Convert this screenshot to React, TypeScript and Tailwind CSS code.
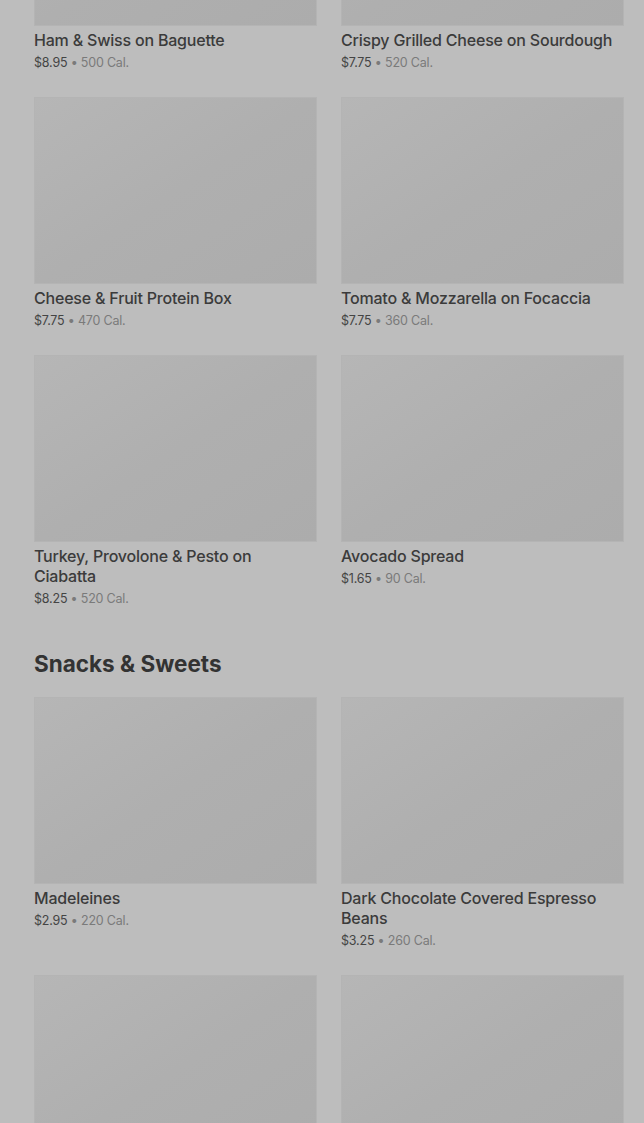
import React from "react";

type Item = { name: string; price: string; cal: string };

const topItems: Item[] = [
  { name: "Ham & Swiss on Baguette", price: "$8.95", cal: "500 Cal." },
  { name: "Crispy Grilled Cheese on Sourdough", price: "$7.75", cal: "520 Cal." },
  { name: "Cheese & Fruit Protein Box", price: "$7.75", cal: "470 Cal." },
  { name: "Tomato & Mozzarella on Focaccia", price: "$7.75", cal: "360 Cal." },
  { name: "Turkey, Provolone & Pesto on Ciabatta", price: "$8.25", cal: "520 Cal." },
  { name: "Avocado Spread", price: "$1.65", cal: "90 Cal." },
];

const snackItems: Item[] = [
  { name: "Madeleines", price: "$2.95", cal: "220 Cal." },
  { name: "Dark Chocolate Covered Espresso Beans", price: "$3.25", cal: "260 Cal." },
  { name: "", price: "", cal: "" },
  { name: "", price: "", cal: "" },
];

const Card = ({ item }: { item: Item }) => (
  <div className="flex flex-col">
    <div className="h-[187px] w-full bg-gradient-to-br from-[#b6b6b6] via-[#afafaf] to-[#acacac] border border-[#b4b4b4]" />
    {item.name && (
      <>
        <div className="mt-[4px] text-[16px] leading-5 font-medium tracking-[-0.2px] text-[#3b3b3b]">{item.name}</div>
        <div className="mt-[3px] text-[12.5px] leading-5 tracking-[-0.2px]">
          <span className="text-[#444]">{item.price}</span>
          <span className="text-[#7a7a7a]"> • {item.cal}</span>
        </div>
      </>
    )}
  </div>
);

export default function App() {
  return (
    <div
      className="h-[1123px] w-full overflow-hidden bg-[#bdbdbd]"
      style={{ fontFamily: "Inter, 'Noto Sans', sans-serif" }}
    >
      <div className="-mt-[161px] pl-[34px] pr-[20px]">
        <div className="grid grid-cols-2 gap-x-6 gap-y-6 items-start">
          {topItems.map((item, i) => (
            <Card key={i} item={item} />
          ))}
        </div>
        <h2 className="mt-[40px] mb-[18px] text-[22.5px] leading-[30px] font-bold text-[#333]">
          Snacks &amp; Sweets
        </h2>
        <div className="grid grid-cols-2 gap-x-6 gap-y-6 items-start">
          {snackItems.map((item, i) => (
            <Card key={i} item={item} />
          ))}
        </div>
      </div>
    </div>
  );
}
